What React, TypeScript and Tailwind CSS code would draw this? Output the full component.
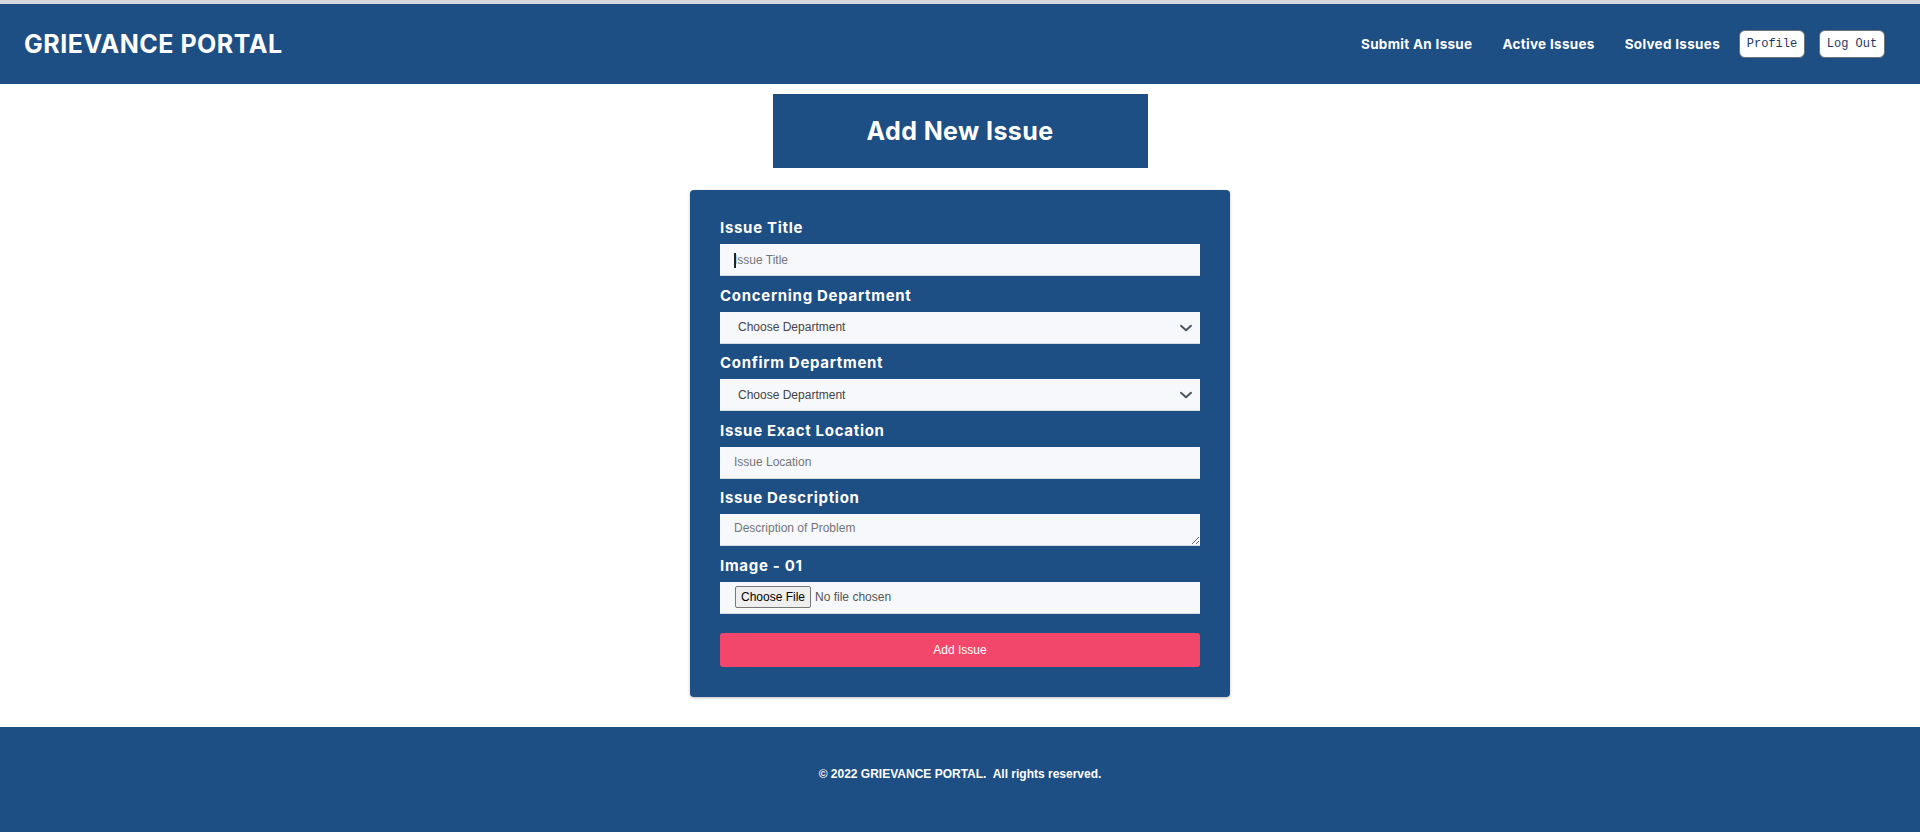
import React from "react";

const BLUE = "bg-[#1d4e84]";

function Label({ children }: { children: React.ReactNode }) {
  return (
    <label className="block text-[15px] leading-[20px] font-bold tracking-[0.7px] text-white mb-[6px] font-['Inter',sans-serif]">
      {children}
    </label>
  );
}

function Chevron() {
  return (
    <svg
      className="pointer-events-none absolute right-[7px] top-1/2 -translate-y-1/2"
      width="14"
      height="8"
      viewBox="0 0 14 8"
      fill="none"
    >
      <path d="M2 1.8L7 6.2L12 1.8" stroke="#4a5561" strokeWidth="2" strokeLinecap="round" strokeLinejoin="round" />
    </svg>
  );
}

const inputCls =
  "block w-full h-[32px] bg-[#f6f8fc] border-b border-[#d5dbe3] text-[12px] text-[#333] font-['Liberation_Sans',Arial,sans-serif] outline-none placeholder:text-[#757575]";

function DeptSelect() {
  return (
    <div className="relative">
      <select
        className={inputCls + " appearance-none pl-[18px] pr-[30px] text-[#444]"}
        defaultValue=""
      >
        <option value="">Choose Department</option>
        <option>Electrical</option>
        <option>Civil</option>
        <option>Water Supply</option>
      </select>
      <Chevron />
    </div>
  );
}

export default function App() {
  return (
    <div className="w-full min-h-[832px] bg-white flex flex-col">
      <div className="h-[4px] bg-[#d6d8da]" />
      <header className={`h-[80px] ${BLUE} flex items-center justify-between pl-[24px] pr-[35px]`}>
        <div className="text-white font-bold text-[25px] leading-none tracking-[0.5px] font-['Inter',sans-serif]">
          GRIEVANCE PORTAL
        </div>
        <nav className="flex items-center text-white font-bold text-[13.5px] tracking-[0.3px] font-['Inter',sans-serif]">
          <a className="mr-[30px]">Submit An Issue</a>
          <a className="mr-[30px]">Active Issues</a>
          <a className="mr-[19px]">Solved Issues</a>
          <button className="h-[28px] w-[66px] rounded-[6px] bg-white border border-[#6f747b] text-[#1d3766] text-[12px] tracking-normal font-normal font-['Liberation_Mono',monospace] mr-[14px]">
            Profile
          </button>
          <button className="h-[28px] w-[66px] rounded-[6px] bg-white border border-[#6f747b] text-[#1d3766] text-[12px] tracking-normal font-normal font-['Liberation_Mono',monospace]">
            Log Out
          </button>
        </nav>
      </header>

      <main className="flex flex-col items-center">
        <div className={`mt-[10px] w-[375px] h-[74px] ${BLUE} flex items-center justify-center`}>
          <h1 className="text-white font-bold text-[25px] tracking-[0.4px] leading-none font-['Inter',sans-serif]">Add New Issue</h1>
        </div>

        <form
          className={`mt-[22px] w-[540px] ${BLUE} rounded-[4px] px-[30px] pt-[28px] pb-[30px] shadow-[0_1px_3px_rgba(0,0,0,0.25)] flex flex-col`}
          onSubmit={(e) => e.preventDefault()}
        >
          <div>
            <Label>Issue Title</Label>
            <div className="relative">
              <input className={inputCls + " pl-[14px]"} placeholder="Issue Title" />
              <span className="pointer-events-none absolute left-[14px] top-[9px] w-[1.5px] h-[15px] bg-[#222]" />
            </div>
          </div>
          <div className="mt-[9.5px]">
            <Label>Concerning Department</Label>
            <DeptSelect />
          </div>
          <div className="mt-[9.5px]">
            <Label>Confirm Department</Label>
            <DeptSelect />
          </div>
          <div className="mt-[9.5px]">
            <Label>Issue Exact Location</Label>
            <input className={inputCls + " pl-[14px]"} placeholder="Issue Location" />
          </div>
          <div className="mt-[9.5px]">
            <Label>Issue Description</Label>
            <textarea
              className={inputCls + " pl-[14px] pt-[6px] leading-[16px]"}
              placeholder="Description of Problem"
            />
          </div>
          <div className="mt-[9.5px]">
            <Label>Image - 01</Label>
            <div className="h-[32px] bg-[#f6f8fc] border-b border-[#d5dbe3] flex items-center pl-[15px]">
              <input
                type="file"
                className="text-[12px] text-[#555] font-['Liberation_Sans',Arial,sans-serif] file:h-[22px] file:px-[5px] file:mr-[4px] file:bg-[#efefef] file:border file:border-solid file:border-[#767676] file:rounded-[2px] file:text-black file:text-[12px]"
              />
            </div>
          </div>
          <button
            type="submit"
            className="mt-[19.5px] h-[34px] w-full rounded-[3px] bg-[#f2476a] text-white text-[12px] font-['Liberation_Sans',Arial,sans-serif]"
          >
            Add Issue
          </button>
        </form>
      </main>

      <footer className={`mt-[30px] h-[105px] ${BLUE} pt-[38px]`}>
        <p className="text-center text-white font-bold text-[12px] leading-[18px] font-['Liberation_Sans',Arial,sans-serif]">
          © 2022 GRIEVANCE PORTAL.&nbsp; All rights reserved.
        </p>
      </footer>
    </div>
  );
}
